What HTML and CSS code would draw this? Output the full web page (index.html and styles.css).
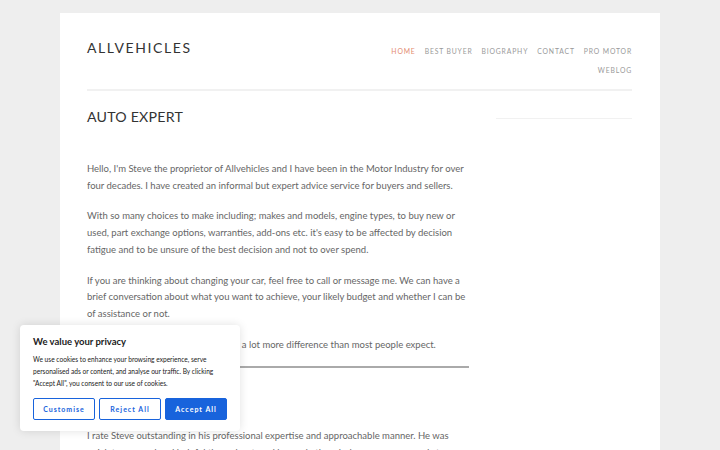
FILE: index.html
```html
<!DOCTYPE html>
<html lang="en">

<head>
    <meta charset="UTF-8">
    <meta name="viewport" content="width=device-width, initial-scale=1.0">
    <link rel="stylesheet" href="styles.css">
    <title>Allvehicles</title>
</head>

<body>
    <div class="site">
        <header class="site-header">
            <div class="site-title">ALLVEHICLES</div>
            <nav class="main-nav">
                <a class="current" href="#">HOME</a>
                <a href="#">BEST BUYER</a>
                <a href="#">BIOGRAPHY</a>
                <a href="#">CONTACT</a>
                <a href="#">PRO MOTOR</a>
                <a href="#">WEBLOG</a>
            </nav>
        </header>

        <div class="content">
            <main class="entry">
                <h1 class="entry-title">AUTO EXPERT</h1>
                <p>Hello, I'm Steve the proprietor of Allvehicles and I have been in the Motor Industry for over four decades. I have created an informal but expert advice service for buyers and sellers.</p>
                <p>With so many choices to make including; makes and models, engine types, to buy new or used, part exchange options, warranties, add-ons etc. it's easy to be affected by decision fatigue and to be unsure of the best decision and not to over spend.</p>
                <p>If you are thinking about changing your car, feel free to call or message me. We can have a brief conversation about what you want to achieve, your likely budget and whether I can be of assistance or not.</p>
                <p>A little independent advice can make a lot more difference than most people expect.</p>
                <hr class="divider">
                <p class="quote">I rate Steve outstanding in his professional expertise and approachable manner. He was quick to respond and helpful throughout, and he made the whole process easy and stress free. Highly recommended.</p>
            </main>
            <aside class="sidebar"></aside>
        </div>
    </div>

    <div class="cookie-box">
        <h2>We value your privacy</h2>
        <p>We use cookies to enhance your browsing experience, serve personalised ads or content, and analyse our traffic. By clicking "Accept All", you consent to our use of cookies.</p>
        <div class="cookie-buttons">
            <button class="btn btn-outline">Customise</button>
            <button class="btn btn-outline">Reject All</button>
            <button class="btn btn-fill">Accept All</button>
        </div>
    </div>
</body>
</html>
```

FILE: styles.css
```css
* {
    box-sizing: border-box;
    margin: 0;
    padding: 0;
}

body {
    background-color: #eeeeee;
    font-family: Lato, "Open Sans", sans-serif;
    overflow: hidden;
    height: 450px;
}

.site {
    width: 600px;
    margin: 13px auto 0;
    background-color: #ffffff;
    padding: 0 28px 0 27px;
    min-height: 800px;
}

.site-header {
    display: flex;
    justify-content: space-between;
    align-items: flex-start;
    padding: 27px 0 10px;
    border-bottom: 2px solid #f1f1f1;
}

.site-title {
    font-size: 14px;
    letter-spacing: 1.6px;
    color: #333333;
    line-height: 16px;
}

.main-nav {
    width: 256px;
    display: flex;
    flex-wrap: wrap;
    justify-content: flex-end;
    column-gap: 9px;
    padding-top: 2px;
}

.main-nav a {
    font-size: 6.8px;
    letter-spacing: 0.85px;
    color: #999999;
    text-decoration: none;
    line-height: 18.5px;
}

.main-nav a.current {
    color: #e38b6f;
}

.content {
    display: flex;
    justify-content: space-between;
}

.entry {
    width: 384px;
    padding-top: 17px;
}

.entry-title {
    font-size: 14.2px;
    font-weight: 400;
    color: #333333;
    letter-spacing: 0.2px;
    line-height: 18px;
    margin-bottom: 35px;
}

.entry p {
    font-size: 9.5px;
    font-weight: 400;
    color: #666666;
    line-height: 16.7px;
    margin-bottom: 14px;
}

.divider {
    border: 0;
    border-top: 2px solid #aaaaaa;
    margin: -1px 2px 60px 0;
}

.sidebar {
    width: 136px;
    margin-top: 27px;
    border-top: 1px solid #f1f1f1;
}

.cookie-box {
    position: absolute;
    left: 20px;
    top: 325px;
    width: 220px;
    background-color: #ffffff;
    border-radius: 4px;
    box-shadow: 0 0 10px rgba(0, 0, 0, 0.12);
    padding: 11px 13px 11px;
}

.cookie-box h2 {
    font-size: 9.5px;
    font-weight: 700;
    color: #212121;
    margin-bottom: 6px;
}

.cookie-box p {
    font-size: 6.6px;
    font-weight: 400;
    color: #212121;
    line-height: 12px;
    margin-bottom: 9px;
}

.cookie-buttons {
    display: flex;
    gap: 4px;
}

.btn {
    font-family: Lato, sans-serif;
    font-size: 7px;
    font-weight: 700;
    letter-spacing: 1px;
    height: 22px;
    border-radius: 2px;
    cursor: pointer;
}

.btn-outline {
    flex: 1;
    background-color: #ffffff;
    color: #1863dc;
    border: 1.5px solid #1863dc;
}

.btn-fill {
    flex: 1;
    background-color: #1863dc;
    color: #ffffff;
    border: 1.5px solid #1863dc;
}
```
